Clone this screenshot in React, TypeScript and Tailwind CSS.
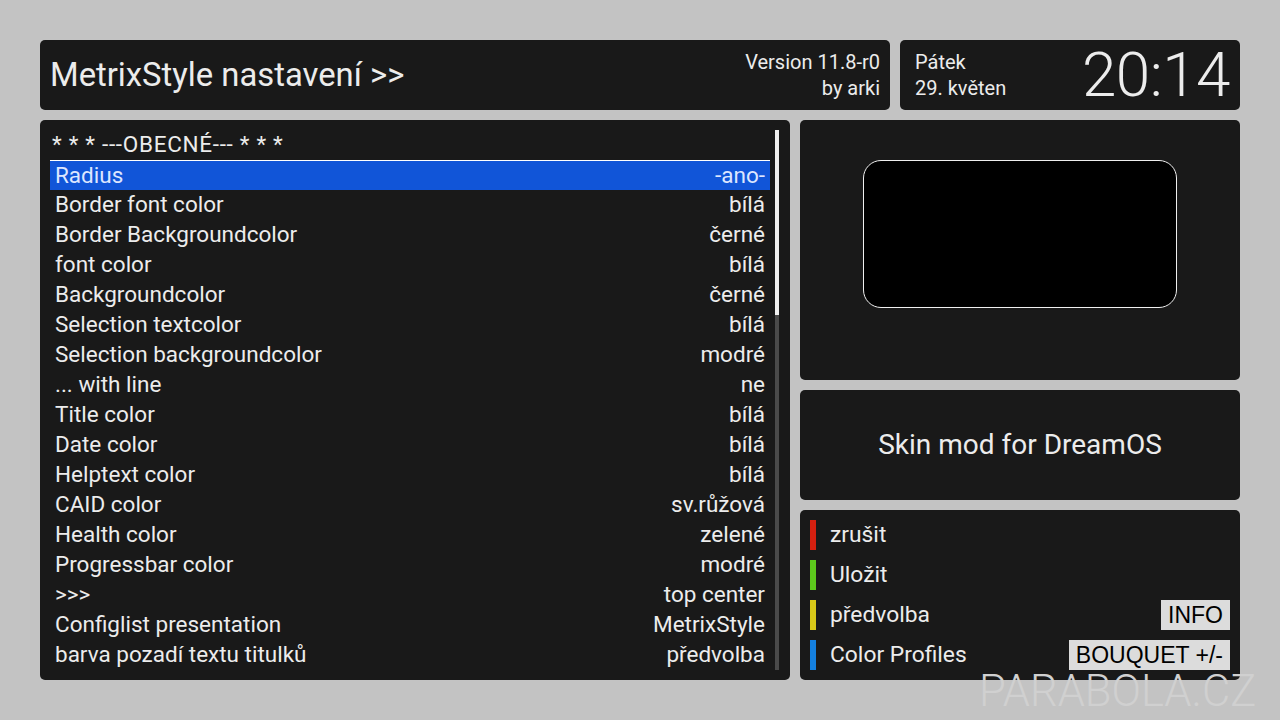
import React from "react";

const rows: [string, string][] = [
  ["Radius", "-ano-"],
  ["Border font color", "bílá"],
  ["Border Backgroundcolor", "černé"],
  ["font color", "bílá"],
  ["Backgroundcolor", "černé"],
  ["Selection textcolor", "bílá"],
  ["Selection backgroundcolor", "modré"],
  ["... with line", "ne"],
  ["Title color", "bílá"],
  ["Date color", "bílá"],
  ["Helptext color", "bílá"],
  ["CAID color", "sv.růžová"],
  ["Health color", "zelené"],
  ["Progressbar color", "modré"],
  [">>>", "top center"],
  ["Configlist presentation", "MetrixStyle"],
  ["barva pozadí textu titulků", "předvolba"],
];

const buttons = [
  { color: "bg-[#d42010]", label: "zrušit", key: "" },
  { color: "bg-[#5cc81c]", label: "Uložit", key: "" },
  { color: "bg-[#d8c818]", label: "předvolba", key: "INFO" },
  { color: "bg-[#1480e0]", label: "Color Profiles", key: "BOUQUET +/-" },
];

export default function App() {
  return (
    <div
      className="relative h-[720px] w-[1280px] overflow-hidden bg-[#c3c3c3] text-[#ececec]"
      style={{ fontFamily: "Roboto, 'Noto Sans', sans-serif" }}
    >
      <div className="flex flex-col gap-[10px] px-[40px] pt-[40px]">
        {/* Top bar */}
        <div className="flex h-[70px] gap-[10px]">
          <div className="flex w-[850px] items-center justify-between rounded-[5px] bg-[#191919] pl-[10px] pr-[10px]">
            <h1 className="text-[32.8px] leading-none">MetrixStyle nastavení &gt;&gt;</h1>
            <div className="flex flex-col items-end text-[20px] leading-[26px]">
              <span>Version 11.8-r0</span>
              <span>by arki</span>
            </div>
          </div>
          <div className="flex flex-1 items-center justify-between rounded-[5px] bg-[#191919] pl-[15px] pr-[10px]">
            <div className="flex flex-col text-[20px] leading-[26px]">
              <span>Pátek</span>
              <span>29. květen</span>
            </div>
            <span className="text-[62px] font-light leading-none tracking-[-0.5px]">20:14</span>
          </div>
        </div>

        {/* Main area */}
        <div className="flex h-[560px] gap-[10px]">
          {/* Config list */}
          <div className="relative flex w-[750px] rounded-[5px] bg-[#191919] py-[10px] pl-[10px] pr-[10px]">
            <div className="flex w-[720px] flex-col text-[22.5px]">
              <div className="flex h-[30px] items-center pl-[2px] tracking-[0.7px]">
                * * * ---OBECNÉ--- * * *
              </div>
              {rows.map(([name, value], i) => (
                <div
                  key={name}
                  className={
                    i === 0
                      ? "flex h-[30px] items-center justify-between border-t border-white bg-[#1155d8] px-[5px] text-[#dde6ff]"
                      : "flex h-[30px] items-center justify-between px-[5px]"
                  }
                >
                  <span>{name}</span>
                  <span>{value}</span>
                </div>
              ))}
            </div>
            <div className="ml-[5px] flex w-[4px] flex-col bg-[#4a4a4a]">
              <div className="h-[185px] bg-[#f0f0f0]" />
            </div>
          </div>

          {/* Right column */}
          <div className="flex flex-1 flex-col gap-[10px]">
            <div className="flex h-[260px] justify-center rounded-[5px] bg-[#191919] pt-[40px]">
              <div className="h-[148px] w-[314px] rounded-[18px] border-[1.5px] border-[#f0f0f0] bg-black" />
            </div>
            <div className="flex h-[110px] items-center justify-center rounded-[5px] bg-[#191919] text-[28px]">
              Skin mod for DreamOS
            </div>
            <div className="flex flex-1 flex-col gap-[10px] rounded-[5px] bg-[#191919] py-[10px] pl-[10px] pr-[10px]">
              {buttons.map((b) => (
                <div key={b.label} className="flex h-[30px] items-center">
                  <div className={`h-[30px] w-[6px] ${b.color}`} />
                  <span className="ml-[14px] flex-1 text-[22.8px]">{b.label}</span>
                  {b.key && (
                    <span
                      className="flex h-[30px] items-center bg-[#dcdcdc] px-[7px] text-[23px] text-black"
                      style={{ fontFamily: "'Liberation Sans', Arial, sans-serif" }}
                    >
                      {b.key}
                    </span>
                  )}
                </div>
              ))}
            </div>
          </div>
        </div>
      </div>

      {/* Watermark */}
      <div className="absolute left-[979px] top-[672px] text-[43.5px] font-light leading-[40px] text-[#d0d0d0]">
        PARABOLA.CZ
      </div>
    </div>
  );
}
